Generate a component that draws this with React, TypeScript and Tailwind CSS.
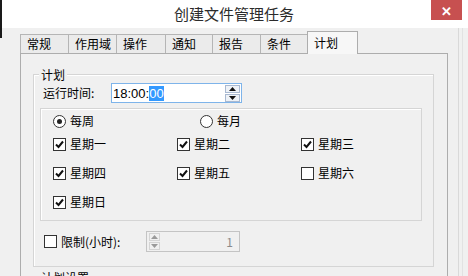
import React from "react";

const font = { fontFamily: '"Noto Sans CJK SC", "Noto Sans", sans-serif' };

const tabs = [
  { label: "常规", w: "w-[48px]" },
  { label: "作用域", w: "w-[48px]" },
  { label: "操作", w: "w-[49px]" },
  { label: "通知", w: "w-[47px]" },
  { label: "报告", w: "w-[48px]" },
  { label: "条件", w: "w-[47px]" },
];

function Check({ checked }: { checked?: boolean }) {
  return (
    <span className="flex h-[13px] w-[13px] shrink-0 items-center justify-center border border-[#333] bg-white">
      {checked && (
        <svg width="9" height="9" viewBox="0 0 9 9">
          <path d="M1 4.5 L3.5 7 L8 1.5" fill="none" stroke="#111" strokeWidth="2" />
        </svg>
      )}
    </span>
  );
}

function Radio({ on }: { on?: boolean }) {
  return (
    <span className="flex h-[13px] w-[13px] shrink-0 items-center justify-center rounded-full border border-[#333] bg-white">
      {on && <span className="h-[5px] w-[5px] rounded-full bg-[#222]" />}
    </span>
  );
}

function Day({ label, checked }: { label: string; checked?: boolean }) {
  return (
    <div className="flex h-[16px] items-center gap-[4px]">
      <Check checked={checked} />
      <span className="text-[12px] leading-none text-black">{label}</span>
    </div>
  );
}

function Arrow({ up, color = "#111" }: { up?: boolean; color?: string }) {
  return (
    <svg width="7" height="4" viewBox="0 0 7 4">
      <path d={up ? "M0 4 L3.5 0 L7 4 Z" : "M0 0 L3.5 4 L7 0 Z"} fill={color} />
    </svg>
  );
}

export default function App() {
  return (
    <div className="relative h-[276px] w-[468px] overflow-hidden bg-[#f0f0f0]" style={font}>
      <div className="flex h-[28px] items-center justify-center bg-white pt-[1px] text-[15px] text-[#2b2b2b]">
        创建文件管理任务
      </div>
      <div className="absolute left-0 top-0 h-[38px] w-[2px] bg-[#1a1a1a]" />
      <div className="absolute left-[431px] top-0 flex h-[20px] w-[31px] items-center justify-center bg-[#c75050] text-[13px] font-bold leading-none text-white">
        ✕
      </div>
      <div className="absolute left-[458px] top-[28px] h-[248px] w-px bg-[#d9d9d9]" />
      <div className="absolute left-[462px] top-[28px] h-[248px] w-px bg-[#e2e2e2]" />

      <div className="pl-[20px] pt-[3px]">
        <div className="flex h-[22px] items-end">
          {tabs.map((t) => (
            <div
              key={t.label}
              className={`${t.w} flex h-[19px] items-center border-l border-t border-[#b5b5b5] bg-[#ebebeb] pl-[6px] text-[12px] leading-none text-black`}
            >
              {t.label}
            </div>
          ))}
          <div className="relative z-10 -mb-px flex h-[23px] w-[51px] items-center border border-b-0 border-[#adadad] bg-[#f7f7f7] pl-[6px] text-[12px] leading-none text-black">
            计划
          </div>
        </div>
        <div className="h-[230px] w-[428px] border-l border-r border-t border-[#adadad] bg-[#f0f0f0]">
          <div className="relative ml-[12px] mt-[20px] h-[193px] w-[401px] border border-[#d5d5d5] shadow-[inset_1px_1px_0_#fff]">
            <span className="absolute left-[5px] top-[-7px] bg-[#f0f0f0] px-[2px] text-[12px] leading-[13px] text-black">
              计划
            </span>
            <div className="mt-[8px] flex h-[20px] items-center">
              <span className="ml-[9px] w-[68px] text-[12px] leading-none text-black">运行时间:</span>
              <div className="flex h-[20px] w-[131px] items-center border border-[#7eb4ea] bg-white">
                <span className="pl-[1px] text-[13px] leading-none text-black" style={{ fontFamily: '"Liberation Sans", sans-serif' }}>
                  18:00:
                  <span className="bg-[#3399ff] text-white">00</span>
                </span>
                <div className="ml-auto mr-[1px] flex flex-col gap-px">
                  <span className="flex h-[8px] w-[15px] items-center justify-center border border-[#a9b9d1] bg-[#eef2f7]">
                    <Arrow up />
                  </span>
                  <span className="flex h-[8px] w-[15px] items-center justify-center border border-[#a9b9d1] bg-[#eef2f7]">
                    <Arrow />
                  </span>
                </div>
              </div>
            </div>

            <div className="ml-[6px] mt-[5px] h-[113px] w-[382px] border border-[#d5d5d5] pl-[12px] pt-[4px] shadow-[inset_1px_1px_0_#fff]">
              <div className="flex h-[16px] items-center">
                <div className="flex w-[147px] items-center gap-[4px]">
                  <Radio on />
                  <span className="text-[12px] leading-none text-black">每周</span>
                </div>
                <div className="flex items-center gap-[4px]">
                  <Radio />
                  <span className="text-[12px] leading-none text-black">每月</span>
                </div>
              </div>
              <div className="mt-[7px] grid grid-cols-[124px_124px_124px] gap-y-[13px]">
                <Day label="星期一" checked />
                <Day label="星期二" checked />
                <Day label="星期三" checked />
                <Day label="星期四" checked />
                <Day label="星期五" checked />
                <Day label="星期六" />
                <Day label="星期日" checked />
              </div>
            </div>

            <div className="mt-[10px] flex h-[21px] items-center">
              <span className="ml-[10px]">
                <Check />
              </span>
              <span className="ml-[4px] w-[85px] text-[12px] leading-none text-black">限制(小时):</span>
              <div className="flex h-[21px] w-[94px] items-center border border-[#c4c4c4] bg-[#f0f0f0]">
                <div className="ml-[2px] flex flex-col gap-px">
                  <span className="flex h-[8px] w-[11px] items-center justify-center border border-[#d4d4d4]">
                    <Arrow up color="#9a9a9a" />
                  </span>
                  <span className="flex h-[8px] w-[11px] items-center justify-center border border-[#d4d4d4]">
                    <Arrow color="#9a9a9a" />
                  </span>
                </div>
                <span className="ml-auto mr-[6px] text-[12px] leading-none text-[#8a8a8a]">1</span>
              </div>
            </div>
          </div>
          <div className="relative ml-[12px] mt-[10px] h-[40px] w-[401px] border border-[#d5d5d5]">
            <span className="absolute left-[5px] top-[-7px] bg-[#f0f0f0] px-[2px] text-[12px] leading-[13px] text-black">
              计划设置
            </span>
          </div>
        </div>
      </div>
    </div>
  );
}
